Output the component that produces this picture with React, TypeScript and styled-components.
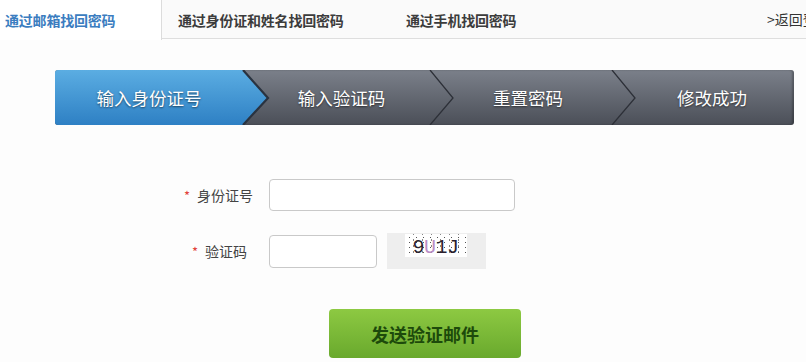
import React from "react";
import styled, { createGlobalStyle } from "styled-components";

const Global = createGlobalStyle`
  html, body {
    margin: 0;
    padding: 0;
    background: #ffffff;
    overflow: hidden;
  }
  body {
    font-family: "Noto Sans CJK SC", "Liberation Sans", sans-serif;
    color: #333;
  }
  * { box-sizing: border-box; }
`;

const Page = styled.div`
  width: 806px;
  height: 362px;
  overflow: hidden;
  background: #fdfdfd;
`;

const TabBar = styled.div`
  display: flex;
  align-items: stretch;
  height: 39px;
  background: #fafafa;
  border-bottom: 1px solid #dedede;
  white-space: nowrap;
`;

const Tab = styled.div<{ $active?: boolean; $width: number; $pad: number }>`
  flex: 0 0 ${(p) => p.$width}px;
  height: ${(p) => (p.$active ? 40 : 39)}px;
  padding-left: ${(p) => p.$pad}px;
  display: flex;
  align-items: center;
  font-size: 14px;
  font-weight: 700;
  color: ${(p) => (p.$active ? "#3b7dc0" : "#3c3c3c")};
  background: ${(p) => (p.$active ? "#ffffff" : "transparent")};
  border-right: ${(p) => (p.$active ? "1px solid #dcdcdc" : "none")};
  letter-spacing: -0.2px;
`;

const BackLink = styled.div`
  margin-left: auto;
  flex: 0 0 39px;
  display: flex;
  align-items: center;
  font-size: 14px;
  color: #333;
  overflow: hidden;
  white-space: nowrap;
`;

const StepBar = styled.div`
  display: flex;
  width: 739px;
  height: 55px;
  margin: 31px 0 0 55px;
  border-radius: 3px;
  overflow: hidden;
  background: linear-gradient(#7b808a, #4b4f58);
  box-shadow: inset -2px 0 2px rgba(0, 0, 0, 0.25);
`;

const Step = styled.div<{ $active?: boolean; $width: number; $pad: number }>`
  position: relative;
  flex: 0 0 ${(p) => p.$width}px;
  padding-left: ${(p) => p.$pad}px;
  display: flex;
  align-items: center;
  justify-content: center;
  font-size: 17.5px;
  color: #ffffff;
  text-shadow: 0 1px 2px rgba(0, 0, 0, 0.55);
  background: ${(p) => (p.$active ? "linear-gradient(#5badE2, #2e80c4)" : "transparent")};
`;

const StepLabel = styled.span`
  position: relative;
  z-index: 2;
`;

const Chevron = styled.svg`
  position: absolute;
  top: 0;
  left: 100%;
  z-index: 1;
  overflow: visible;
`;

const Form = styled.div`
  display: grid;
  grid-template-columns: 253px auto;
  column-gap: 16px;
  row-gap: 22px;
  align-items: center;
  margin-top: 54px;
`;

const Label = styled.div<{ $pad?: number }>`
  display: flex;
  justify-content: flex-end;
  align-items: center;
  font-size: 14px;
  color: #444;
  padding-right: ${(p) => p.$pad ?? 0}px;
`;

const Star = styled.span`
  color: #e2413a;
  margin-right: 7px;
  font-size: 13px;
`;

const Field = styled.div`
  display: flex;
  align-items: center;
  gap: 10px;
`;

const Input = styled.input<{ $width: number; $height: number }>`
  width: ${(p) => p.$width}px;
  height: ${(p) => p.$height}px;
  border: 1px solid #c9c9c9;
  border-radius: 4px;
  background: #fff;
  outline: none;
  padding: 0 6px;
  font-size: 14px;
`;

const CaptchaBox = styled.div`
  width: 99px;
  height: 36px;
  background: #eeeeee;
  padding: 1px 0 0 18px;
`;

const CaptchaImg = styled.div`
  width: 62px;
  height: 23px;
  background-color: #fff;
  background-image: radial-gradient(circle, #555 0.6px, transparent 0.9px),
    radial-gradient(circle, #888 0.6px, transparent 0.9px);
  background-size: 7px 5px, 9px 6px;
  background-position: 1px 1px, 4px 3px;
  display: flex;
  align-items: center;
  justify-content: center;
  font-family: "Liberation Mono", monospace;
  font-size: 20px;
  line-height: 1;
  padding-top: 4px;
`;

const CaptchaChar = styled.span<{ $color?: string }>`
  color: ${(p) => p.$color ?? "#2a1f2e"};
  margin-left: -0.5px;
`;

const SubmitRow = styled.div`
  padding: 40px 0 0 329px;
`;

const Submit = styled.button`
  width: 192px;
  height: 49px;
  border: none;
  border-radius: 4px;
  background: linear-gradient(#8dc942, #69a92d);
  font-family: "Noto Sans CJK SC", sans-serif;
  font-size: 18px;
  font-weight: 700;
  color: #1d4a0b;
  cursor: pointer;
  padding: 0;
`;

const steps = [
  { label: "输入身份证号", width: 188, pad: 0 },
  { label: "输入验证码", width: 187, pad: 10 },
  { label: "重置密码", width: 182, pad: 14 },
  { label: "修改成功", width: 182, pad: 18 },
];

export default function App() {
  return (
    <>
      <Global />
      <Page>
        <TabBar>
          <Tab $active $width={162} $pad={5}>通过邮箱找回密码</Tab>
          <Tab $width={228} $pad={16}>通过身份证和姓名找回密码</Tab>
          <Tab $width={200} $pad={16}>通过手机找回密码</Tab>
          <BackLink>&gt;返回登录</BackLink>
        </TabBar>

        <StepBar>
          {steps.map((s, i) => (
            <Step key={s.label} $active={i === 0} $width={s.width} $pad={s.pad}>
              <StepLabel>{s.label}</StepLabel>
              {i < steps.length - 1 && (
                <Chevron width="26" height="55" viewBox="0 0 26 55">
                  <defs>
                    <linearGradient id="blueArrow" x1="0" y1="0" x2="0" y2="1">
                      <stop offset="0" stopColor="#5badE2" />
                      <stop offset="1" stopColor="#2e80c4" />
                    </linearGradient>
                  </defs>
                  {i === 0 ? (
                    <>
                      <polygon points="-1,0 0,0 25,28 0,55 -1,55" fill="url(#blueArrow)" />
                      <polyline points="0,0 25,28 0,55" fill="none" stroke="#2a3340" strokeWidth="2.2" />
                    </>
                  ) : (
                    <polyline points="0,0 23,28 0,55" fill="none" stroke="#2d3038" strokeWidth="1.3" />
                  )}
                </Chevron>
              )}
            </Step>
          ))}
        </StepBar>

        <Form>
          <Label>
            <Star>*</Star>身份证号
          </Label>
          <Field>
            <Input $width={246} $height={32} />
          </Field>
          <Label $pad={6}>
            <Star>*</Star>验证码
          </Label>
          <Field>
            <Input $width={108} $height={33} />
            <CaptchaBox>
              <CaptchaImg>
                <CaptchaChar>9</CaptchaChar>
                <CaptchaChar $color="#b98cc6">U</CaptchaChar>
                <CaptchaChar>1</CaptchaChar>
                <CaptchaChar>J</CaptchaChar>
              </CaptchaImg>
            </CaptchaBox>
          </Field>
        </Form>

        <SubmitRow>
          <Submit>发送验证邮件</Submit>
        </SubmitRow>
      </Page>
    </>
  );
}
